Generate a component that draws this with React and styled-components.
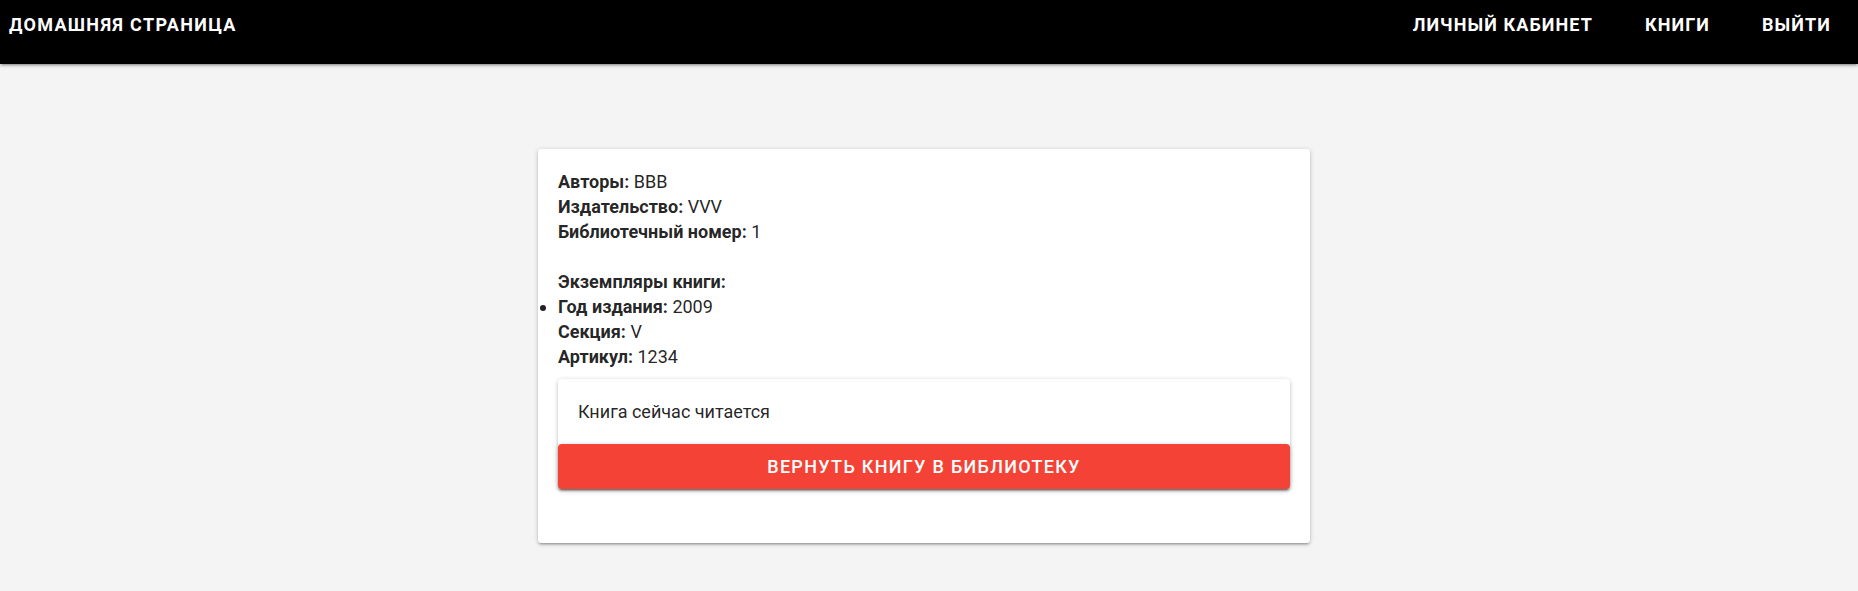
import React from 'react';
import styled, { createGlobalStyle } from 'styled-components';

const GlobalStyle = createGlobalStyle`
  html, body {
    margin: 0;
    padding: 0;
    background: #f4f4f4;
    font-family: Roboto, "Liberation Sans", sans-serif;
    color: rgba(0, 0, 0, 0.87);
  }
`;

const Nav = styled.nav`
  height: 64px;
  background: #000;
  display: flex;
  justify-content: space-between;
  align-items: flex-start;
  box-shadow: 0 2px 2px 0 rgba(0,0,0,0.14), 0 3px 1px -2px rgba(0,0,0,0.12), 0 1px 5px 0 rgba(0,0,0,0.2);
`;

const Brand = styled.a`
  color: #fff;
  font-size: 18px;
  font-weight: 700;
  letter-spacing: 1.3px;
  line-height: 50px;
  padding-left: 9px;
  text-transform: uppercase;
  text-decoration: none;
`;

const Links = styled.div`
  display: flex;
  padding-right: 1px;
`;

const NavLink = styled.a`
  color: #fff;
  font-size: 18px;
  font-weight: 700;
  letter-spacing: 1.1px;
  line-height: 50px;
  padding: 0 26px;
  text-transform: uppercase;
  text-decoration: none;
`;

const Main = styled.main`
  padding: 85px 0 40px;
`;

const Card = styled.div`
  width: 732px;
  margin-left: 538px;
  padding: 20px 20px 54px;
  background: #fff;
  border-radius: 3px;
  box-shadow: 0 2px 2px 0 rgba(0,0,0,0.14), 0 3px 1px -2px rgba(0,0,0,0.12), 0 1px 5px 0 rgba(0,0,0,0.2);
  font-size: 18px;
  line-height: 25px;
`;

const Field = styled.div``;

const Label = styled.b`
  font-weight: 700;
`;

const Spacer = styled.div`
  height: 25px;
`;

const Copies = styled.ul`
  margin: 0;
  padding: 0;
  list-style: disc outside;
`;

const Copy = styled.li`
  margin-left: 0;
`;

const Status = styled.div`
  margin-top: 10px;
  border-radius: 4px;
  background: #fff;
  box-shadow: 0 2px 2px 0 rgba(0,0,0,0.14), 0 3px 1px -2px rgba(0,0,0,0.12), 0 1px 5px 0 rgba(0,0,0,0.2);
`;

const StatusText = styled.div`
  padding: 20px;
`;

const ReturnButton = styled.button`
  display: block;
  width: 100%;
  height: 45px;
  border: none;
  border-radius: 4px;
  background: #f44336;
  color: #fff;
  font-family: inherit;
  font-size: 18px;
  font-weight: 500;
  letter-spacing: 1.3px;
  text-transform: uppercase;
  cursor: pointer;
  box-shadow: 0 2px 2px 0 rgba(0,0,0,0.14), 0 3px 1px -2px rgba(0,0,0,0.12), 0 1px 5px 0 rgba(0,0,0,0.2);
`;

const book = {
  authors: 'BBB',
  publisher: 'VVV',
  number: '1',
  copies: [{ year: '2009', section: 'V', article: '1234' }],
};

export default function App() {
  return (
    <>
      <GlobalStyle />
      <Nav>
        <Brand href="#">Домашняя страница</Brand>
        <Links>
          <NavLink href="#">Личный кабинет</NavLink>
          <NavLink href="#">Книги</NavLink>
          <NavLink href="#">Выйти</NavLink>
        </Links>
      </Nav>
      <Main>
        <Card>
          <Field><Label>Авторы:</Label> {book.authors}</Field>
          <Field><Label>Издательство:</Label> {book.publisher}</Field>
          <Field><Label>Библиотечный номер:</Label> {book.number}</Field>
          <Spacer />
          <Field><Label>Экземпляры книги:</Label></Field>
          <Copies>
            {book.copies.map((c) => (
              <Copy key={c.article}>
                <Field><Label>Год издания:</Label> {c.year}</Field>
                <Field><Label>Секция:</Label> {c.section}</Field>
                <Field><Label>Артикул:</Label> {c.article}</Field>
                <Status>
                  <StatusText>Книга сейчас читается</StatusText>
                  <ReturnButton>Вернуть книгу в библиотеку</ReturnButton>
                </Status>
              </Copy>
            ))}
          </Copies>
        </Card>
      </Main>
    </>
  );
}
